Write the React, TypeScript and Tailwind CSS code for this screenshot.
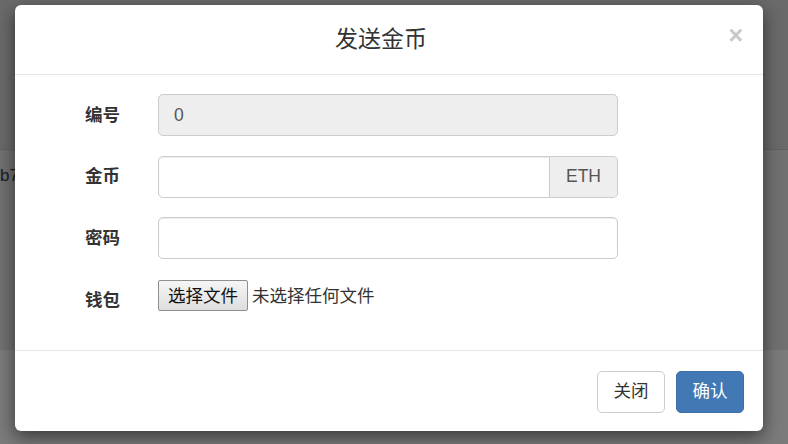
export default function App() {
  const cjk = { fontFamily: '"Liberation Sans", "Noto Sans CJK SC", sans-serif' };
  return (
    <div className="relative w-[788px] h-[444px] overflow-hidden" style={cjk}>
      {/* page under the backdrop */}
      <div className="flex flex-col h-full">
        <div className="h-[150px] bg-[#6a6a6a] border-b border-[#626262]" />
        <div className="h-[200px] bg-[#717171] pt-[14px] text-[17px] text-[#1c1c1c] leading-[24px]">
          b7
        </div>
        <div className="flex-1 bg-[#7b7b7b]" />
      </div>

      {/* modal */}
      <div className="absolute left-[15px] top-[5px] w-[748px] h-[426px] bg-white rounded-[6px] shadow-[0_6px_18px_rgba(0,0,0,0.55)] flex flex-col">
        <div className="relative h-[70px] border-b border-[#e5e5e5] flex items-center justify-center pr-[16px]">
          <h4 className="text-[23px] text-[#333] font-normal leading-[31px] -mt-[1px]">发送金币</h4>
          <button className="absolute right-[20px] top-[18px] text-[25px] font-bold leading-none text-[#c8c8c8]" style={{ fontFamily: '"Liberation Sans", sans-serif' }}>
            ×
          </button>
        </div>

        <div className="flex-1 pt-[19px] pl-[34px] flex flex-col gap-[19.5px] border-b border-[#e5e5e5]">
          <div className="flex items-center">
            <label className="w-[71px] text-right text-[17.5px] font-bold text-[#333]">编号</label>
            <div className="ml-[38px] w-[460px] h-[42px] bg-[#eeeeee] border border-[#cccccc] rounded-[5px] px-[15px] flex items-center text-[17.5px] text-[#555]">
              0
            </div>
          </div>
          <div className="flex items-center">
            <label className="w-[71px] text-right text-[17.5px] font-bold text-[#333]">金币</label>
            <div className="ml-[38px] w-[460px] h-[42px] flex">
              <input className="flex-1 min-w-0 border border-[#cccccc] rounded-l-[5px] px-[15px] text-[17px] outline-none shadow-[inset_0_1px_1px_rgba(0,0,0,0.075)]" />
              <span className="w-[68px] bg-[#eeeeee] border border-l-0 border-[#cccccc] rounded-r-[5px] flex items-center justify-center text-[17.5px] text-[#555]">
                ETH
              </span>
            </div>
          </div>
          <div className="flex items-center">
            <label className="w-[71px] text-right text-[17.5px] font-bold text-[#333]">密码</label>
            <input
              type="password"
              className="ml-[38px] w-[460px] h-[42px] border border-[#cccccc] rounded-[5px] px-[15px] text-[17px] outline-none shadow-[inset_0_1px_1px_rgba(0,0,0,0.075)]"
            />
          </div>
          <div className="flex items-center">
            <label className="w-[71px] text-right text-[17.5px] font-bold text-[#333] pt-[8px]">钱包</label>
            <div className="ml-[38px] flex items-center">
              <span className="h-[31px] w-[90px] border border-[#8f8f8f] rounded-[2px] bg-gradient-to-b from-[#f6f6f6] to-[#dedede] flex items-center justify-center text-[17.5px] text-[#111]">
                选择文件
              </span>
              <span className="ml-[4px] text-[17.5px] text-[#333]">未选择任何文件</span>
            </div>
          </div>
        </div>

        <div className="h-[80px] flex items-center justify-end pr-[19px] gap-[11px] pt-[1px]">
          <button className="w-[68px] h-[42px] border border-[#cccccc] rounded-[5px] bg-white text-[17.5px] text-[#333]">
            关闭
          </button>
          <button className="w-[68px] h-[42px] border border-[#3a6fa8] rounded-[5px] bg-[#4279b5] text-[17.5px] text-white">
            确认
          </button>
        </div>
      </div>
    </div>
  );
}
